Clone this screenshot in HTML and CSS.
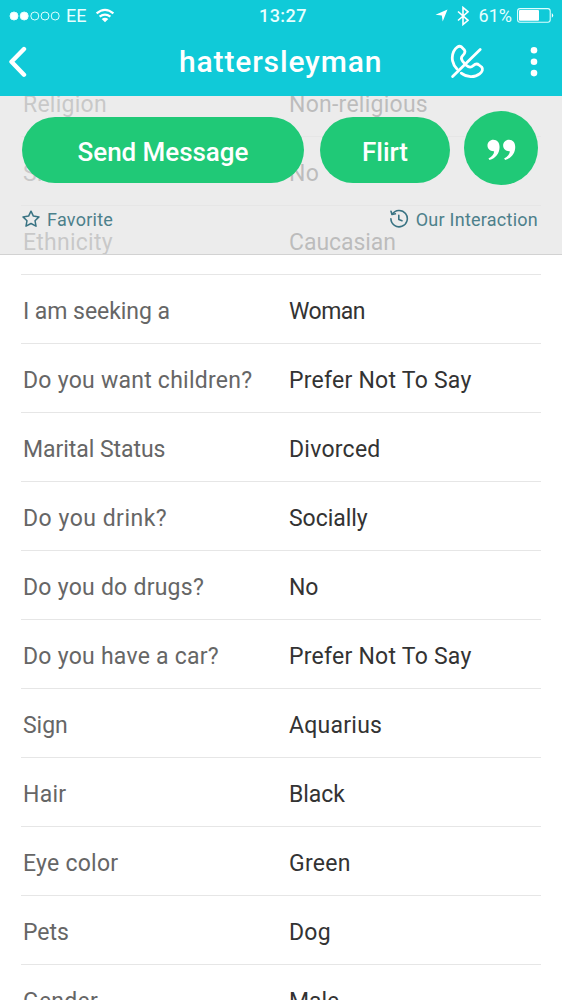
FILE: index.html
```html
<!DOCTYPE html>
<html lang="en">
<head>
<meta charset="utf-8">
<title>hattersleyman</title>
<link rel="stylesheet" href="styles.css">
</head>
<body>
<div class="phone">
  <header class="topbar">
    <div class="status">
      <div class="status-left">
        <svg class="signal" width="52" height="10" viewBox="0 0 52 10"><g stroke="#dff" stroke-width="1"><circle cx="5" cy="5" r="4" fill="#fff"/><circle cx="15.2" cy="5" r="4" fill="#fff"/><circle cx="25.8" cy="5" r="4" fill="none"/><circle cx="36" cy="5" r="4" fill="none"/><circle cx="46.2" cy="5" r="4" fill="none"/></g></svg>
        <span class="carrier">EE</span>
        <svg class="wifi" width="20" height="15" viewBox="0 0 20 15"><g fill="none" stroke="#fff" stroke-width="2.2"><path d="M1.6 5.4Q10 -1.6 18.4 5.4"/><path d="M4.6 8.7Q10 4.4 15.4 8.7"/></g><path d="M6.7 10.9Q10 8.4 13.3 10.9L10 14.2Z" fill="#fff"/></svg>
      </div>
      <span class="clock">13:27</span>
      <div class="status-right">
        <svg width="13" height="13" viewBox="0 0 13 13"><path d="M12.5.5L7.7 12.5 6.8 6.6.5 5.7Z" fill="#fff"/></svg>
        <svg class="bluetooth" width="12" height="20" viewBox="0 0 12 20"><path d="M1 5.5L11 14.3 6 18.5V1.5L11 5.8 1 14.5" fill="none" stroke="#fff" stroke-width="1.6"/></svg>
        <span class="percent">61%</span>
        <svg class="battery" width="37" height="15" viewBox="0 0 37 15"><rect x=".6" y=".6" width="32.6" height="13.6" rx="2.4" fill="none" stroke="#dff" stroke-width="1.1"/><rect x="2" y="2" width="20" height="10.8" rx="1" fill="#fff"/><path d="M34.8 5Q37.6 7.4 34.8 9.8Z" fill="#fff"/></svg>
      </div>
    </div>
    <div class="nav">
      <svg class="back" width="22" height="32" viewBox="0 0 22 32"><path d="M18 3L5.5 15.7 18 28.7" fill="none" stroke="#fff" stroke-width="4.4" stroke-linecap="round" stroke-linejoin="round"/></svg>
      <h1 class="title">hattersleyman</h1>
      <svg class="nocall" width="36" height="36" viewBox="0 0 36 36"><g fill="none" stroke="#fff" stroke-width="2.8" stroke-linecap="round" stroke-linejoin="round"><path d="M8 25C3.5 20.6 1.9 13.6 4.6 7.6 6.6 3.6 9.8 1.2 12.3 2.8L15.2 5.7C17 8 15.6 9.9 13.4 12 11.4 14 12.6 16.6 15.6 19.6"/><path d="M17.2 21.2C19.6 23.4 22 23.8 24.1 21.8 26.2 19.8 28.2 19.4 30 21L32.6 23C34.4 25 33.4 27.6 30.6 29.8 25.8 33.8 17.6 33.4 12.2 29.2"/><path d="M31.2 5.6L3.6 32.6"/></g></svg>
      <svg class="more" width="8" height="30" viewBox="0 0 8 30"><g fill="#fff"><circle cx="4" cy="3.3" r="3.3"/><circle cx="4" cy="14.7" r="3.3"/><circle cx="4" cy="26.1" r="3.3"/></g></svg>
    </div>
  </header>
  <main class="content">
    <dl class="details">
      <div class="row"><dt>Religion</dt><dd>Non-religious</dd></div>
      <div class="row"><dt>Smoke</dt><dd>No</dd></div>
      <div class="row"><dt>Ethnicity</dt><dd class="tight">Caucasian</dd></div>
      <div class="row"><dt class="tight">I am seeking a</dt><dd class="tighter">Woman</dd></div>
      <div class="row"><dt>Do you want children?</dt><dd>Prefer Not To Say</dd></div>
      <div class="row"><dt class="tight">Marital Status</dt><dd>Divorced</dd></div>
      <div class="row"><dt class="wide">Do you drink?</dt><dd class="tight">Socially</dd></div>
      <div class="row"><dt>Do you do drugs?</dt><dd class="tight">No</dd></div>
      <div class="row"><dt>Do you have a car?</dt><dd>Prefer Not To Say</dd></div>
      <div class="row"><dt class="tight">Sign</dt><dd>Aquarius</dd></div>
      <div class="row"><dt>Hair</dt><dd class="tight">Black</dd></div>
      <div class="row"><dt>Eye color</dt><dd>Green</dd></div>
      <div class="row"><dt class="tight">Pets</dt><dd>Dog</dd></div>
      <div class="row"><dt>Gender</dt><dd class="tight">Male</dd></div>
    </dl>
    <section class="actions">
      <div class="buttons">
        <button class="pill send">Send Message</button>
        <button class="pill flirt">Flirt</button>
        <button class="round" aria-label="Quote"><svg width="29" height="22" viewBox="0 0 30 24" preserveAspectRatio="none"><path id="q" d="M6.6.8C10.6.8 13 4.1 13 8.6 13 15.5 9 20.8 2.6 23L1.5 21.3C5.3 19.3 7.2 16.8 7.4 13.4 3.5 13.8.5 11 .5 7.2.5 3.4 3.1.8 6.6.8Z" fill="#fff"/><use href="#q" x="16.2"/></svg></button>
      </div>
      <div class="links">
        <a class="link"><svg width="18" height="18" viewBox="0 0 18 18"><path d="M9 1.2L11.4 6.1 17 6.9 13 10.7 14 16.2 9 13.5 4 16.2 5 10.7 1 6.9 6.6 6.1Z" fill="none" stroke="#397383" stroke-width="1.5" stroke-linejoin="round"/></svg><span class="fav">Favorite</span></a>
        <a class="link"><svg width="20" height="20" viewBox="0 0 20 20"><g fill="none" stroke="#397383" stroke-width="1.6" stroke-linecap="round" stroke-linejoin="round"><path d="M3.2 5.2A8.2 8.2 0 1 1 1.9 9.8"/><path d="M2 2.2L3 5.5 6.4 4.8M9.8 6.2V10.5L13 11.7"/></g></svg><span class="interaction">Our Interaction</span></a>
      </div>
    </section>
  </main>
</div>
</body>
</html>
```
FILE: styles.css
```css
* { box-sizing: border-box; }
body { margin: 0; font-family: Roboto, "Liberation Sans", sans-serif; background: #fff; }
.phone { width: 562px; height: 1000px; overflow: hidden; display: flex; flex-direction: column; }
.topbar { position: relative; z-index: 2; height: 96px; flex: none; background: #10cad8; color: #fff; }
svg { display: block; flex: none; }
.status { height: 31px; display: grid; grid-template-columns: 1fr auto 1fr; align-items: center; padding: 0 8px 0 9px; font-size: 18px; color: #e6ffff; }
.status-left, .status-right { display: flex; align-items: center; }
.status-right { justify-content: flex-end; }
.carrier { margin-left: 5px; font-size: 18px; }
.wifi { margin-left: 9px; }
.clock { font-weight: 500; font-size: 18px; letter-spacing: .5px; padding-left: 3px; }
.bluetooth { margin-left: 9px; }
.percent { margin: 0 5px 0 10px; font-size: 18px; }
.nav { height: 65px; display: flex; align-items: center; padding: 0 24px 4px 6px; }
.title { margin: 0 0 0 151px; width: 206px; font-size: 30px; line-height: 36px; font-weight: 500; letter-spacing: .85px; white-space: nowrap; }
.nocall { margin-left: 64px; }
.more { margin-left: auto; }
.content { position: relative; flex: 1; min-height: 0; }
.details { margin: -28px 21px 0; }
.row { height: 69px; display: grid; grid-template-columns: 266px 1fr; align-items: center; border-bottom: 1px solid #e6e6e6; padding: 4px 0 0 2px; font-size: 23px; letter-spacing: .25px; white-space: nowrap; }
.tight { letter-spacing: -.05px; }
.tighter { letter-spacing: -.5px; }
.wide { letter-spacing: .5px; }
dt { color: #666; }
dd { margin: 0; color: #333; }
.actions { position: absolute; inset: 0 0 auto; height: 159px; background: rgba(230, 230, 230, .765); border-bottom: 1px solid #d2d2d2; }
.buttons { display: flex; align-items: center; padding: 15px 24px 0 22px; }
button { border: 0; padding: 0; background: #20c977; color: #fff; font: 500 26px/1 Roboto, "Liberation Sans", sans-serif; }
.pill { height: 66px; border-radius: 33px; padding-top: 4px; margin-top: 3px; }
.send { width: 282px; letter-spacing: -.05px; }
.flirt { width: 130px; margin-left: 16px; }
.round { width: 74px; height: 74px; border-radius: 50%; margin-left: auto; padding-top: 3px; display: flex; align-items: center; justify-content: center; }
.links { display: flex; justify-content: space-between; padding: 22px 24px 0 22px; }
.link { display: flex; align-items: center; height: 24px; gap: 7px; color: #4c808b; font-size: 18px; letter-spacing: .25px; }
```
